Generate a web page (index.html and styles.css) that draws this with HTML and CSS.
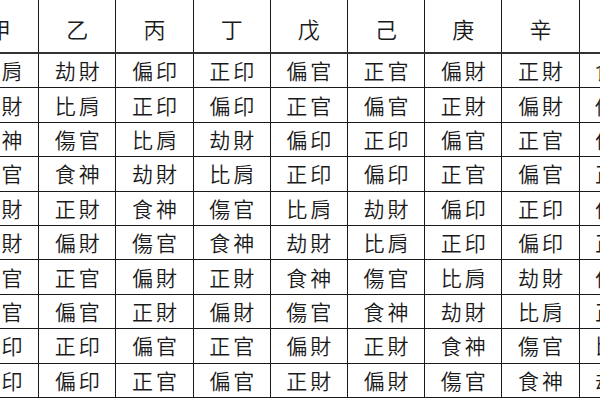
FILE: index.html
```html
<!DOCTYPE html>
<html lang="zh-Hant">
<head>
<meta charset="utf-8">
<link rel="stylesheet" href="styles.css">
</head>
<body>
<div class="frame">
<table class="gods">
<thead>
<tr><th>甲</th><th>乙</th><th>丙</th><th>丁</th><th>戊</th><th>己</th><th>庚</th><th>辛</th><th>壬</th><th>癸</th></tr>
</thead>
<tbody>
<tr><td>比肩</td><td>劫財</td><td>偏印</td><td>正印</td><td>偏官</td><td>正官</td><td>偏財</td><td>正財</td><td>食神</td><td>傷官</td></tr>
<tr><td>劫財</td><td>比肩</td><td>正印</td><td>偏印</td><td>正官</td><td>偏官</td><td>正財</td><td>偏財</td><td>傷官</td><td>食神</td></tr>
<tr><td>食神</td><td>傷官</td><td>比肩</td><td>劫財</td><td>偏印</td><td>正印</td><td>偏官</td><td>正官</td><td>偏財</td><td>正財</td></tr>
<tr><td>傷官</td><td>食神</td><td>劫財</td><td>比肩</td><td>正印</td><td>偏印</td><td>正官</td><td>偏官</td><td>正財</td><td>偏財</td></tr>
<tr><td>偏財</td><td>正財</td><td>食神</td><td>傷官</td><td>比肩</td><td>劫財</td><td>偏印</td><td>正印</td><td>偏官</td><td>正官</td></tr>
<tr><td>正財</td><td>偏財</td><td>傷官</td><td>食神</td><td>劫財</td><td>比肩</td><td>正印</td><td>偏印</td><td>正官</td><td>偏官</td></tr>
<tr><td>偏官</td><td>正官</td><td>偏財</td><td>正財</td><td>食神</td><td>傷官</td><td>比肩</td><td>劫財</td><td>偏印</td><td>正印</td></tr>
<tr><td>正官</td><td>偏官</td><td>正財</td><td>偏財</td><td>傷官</td><td>食神</td><td>劫財</td><td>比肩</td><td>正印</td><td>偏印</td></tr>
<tr><td>偏印</td><td>正印</td><td>偏官</td><td>正官</td><td>偏財</td><td>正財</td><td>食神</td><td>傷官</td><td>比肩</td><td>劫財</td></tr>
<tr><td>正印</td><td>偏印</td><td>正官</td><td>偏官</td><td>正財</td><td>偏財</td><td>傷官</td><td>食神</td><td>劫財</td><td>比肩</td></tr>
</tbody>
</table>
</div>
</body>
</html>
```
FILE: styles.css
```css
html, body {
  margin: 0;
  padding: 0;
  background: #fff;
}
.frame {
  width: 600px;
  height: 400px;
  overflow: hidden;
}
.gods {
  border-collapse: collapse;
  table-layout: fixed;
  width: 773px;
  margin-left: -39px;
  margin-top: -1px;
  font-family: "Noto Sans CJK TC", "Noto Sans CJK SC", sans-serif;
  color: #1a1a1a;
}
.gods th,
.gods td {
  border: 1px solid #1a1a1a;
  text-align: center;
  padding: 0;
  font-weight: 350;
}
.gods th {
  height: 49px;
  padding-top: 3px;
  font-size: 22px;
  border-bottom: 2px solid #333;
}
.gods td {
  height: 33.4px;
  font-size: 21px;
  letter-spacing: 3px;
  text-indent: 3px;
  line-height: 1;
}
```
